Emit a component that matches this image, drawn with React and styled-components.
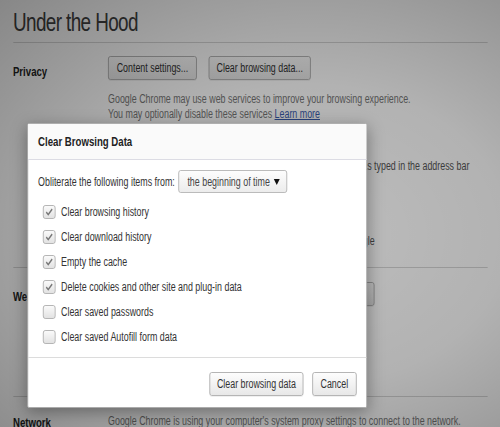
import React from 'react';
import styled, { createGlobalStyle } from 'styled-components';

// the reference is a horizontally squeezed capture, so the whole stage is laid
// out 676px wide and narrowed to 500px on screen
const SQUEEZE = 0.74;

const GlobalStyle = createGlobalStyle`
  html, body {
    margin: 0;
    padding: 0;
    background: #fff;
    overflow: hidden;
  }
  body {
    font-family: "Liberation Sans", Arial, sans-serif;
    font-size: 12px;
    color: #333;
  }
`;

const Stage = styled.div`
  position: relative;
  width: ${500 / SQUEEZE}px;
  height: 427px;
  overflow: hidden;
  transform: scale(${SQUEEZE}, 1);
  transform-origin: 0 0;
`;

const Page = styled.div`
  padding: 8px 17px 0 17.5px;
`;

const Title = styled.h1`
  margin: 0;
  font-weight: normal;
  font-size: 25.5px;
  letter-spacing: -0.8px;
  color: #404040;
  height: 34px;
  border-bottom: 1px solid #d6d6d6;
`;

const Section = styled.div`
  display: grid;
  grid-template-columns: 128.5px 1fr;
  padding: ${p => p.pad || '13px 0 0'};
  border-bottom: ${p => (p.line ? '1px solid #d6d6d6' : 'none')};
  height: ${p => p.h || 'auto'};
  box-sizing: border-box;
`;

const Label = styled.div`
  font-weight: bold;
  font-size: 13px;
  color: #222;
  padding-top: ${p => p.top || '6px'};
  white-space: nowrap;
`;

const Content = styled.div`
  display: flex;
  flex-direction: column;
`;

const ButtonRow = styled.div`
  display: flex;
  gap: ${p => p.gap || 16}px;
  align-items: center;
  color: #555;
  white-space: nowrap;
`;

const Button = styled.button`
  font-family: inherit;
  font-size: 12px;
  color: #333;
  height: 24px;
  width: ${p => p.w}px;
  padding: 0;
  border: 1px solid #aaa;
  border-radius: 3px;
  background: linear-gradient(#fdfdfd, #e8e8e8);
  box-shadow: 0 1px 0 rgba(0, 0, 0, 0.06);
  white-space: nowrap;
`;

const Desc = styled.p`
  margin: ${p => p.m || '12px 0 0'};
  color: #777;
  font-size: 12px;
  line-height: 15px;
  white-space: nowrap;
`;

const Link = styled.a`
  color: #3a5dae;
  text-decoration: underline;
`;

const OptionRow = styled.div`
  display: flex;
  align-items: center;
  gap: 5px;
  height: 25px;
  color: #555;
  white-space: nowrap;
`;

const Overlay = styled.div`
  position: absolute;
  inset: 0;
  background: radial-gradient(
    ellipse at 62% 55%,
    rgba(0, 0, 0, 0.26) 0%,
    rgba(0, 0, 0, 0.3) 45%,
    rgba(0, 0, 0, 0.47) 100%
  );
`;

const Dialog = styled.div`
  position: absolute;
  left: 36.5px;
  top: 123px;
  width: 459.5px;
  background: #fff;
  border: 1px solid #a9a9a9;
  border-radius: 2px;
  box-shadow: 0 4px 18px rgba(0, 0, 0, 0.35);
  box-sizing: border-box;
`;

const DialogHeader = styled.div`
  height: 35px;
  display: flex;
  align-items: center;
  padding: 0 14px;
  background: #fafafa;
  border-bottom: 1px solid #dcdce4;
  font-weight: bold;
  font-size: 13px;
  color: #222;
`;

const DialogBody = styled.div`
  padding: 10px 14px 8px;
`;

const FromRow = styled.div`
  display: flex;
  align-items: center;
  gap: 5px;
  color: #333;
  margin-bottom: 6px;
  white-space: nowrap;
`;

const Select = styled.div`
  display: flex;
  align-items: center;
  justify-content: space-between;
  width: ${p => p.w}px;
  height: 23px;
  box-sizing: border-box;
  padding: 0 9px 0 11px;
  border: 1px solid #b0b0b0;
  border-radius: 3px;
  background: linear-gradient(#fdfdfd, #ececec);
  color: #444;
`;

const Arrow = styled.span`
  width: 0;
  height: 0;
  border-left: 4px solid transparent;
  border-right: 4px solid transparent;
  border-top: 6px solid #111;
`;

const CheckRow = styled.label`
  display: flex;
  align-items: center;
  gap: 8px;
  height: 25px;
  padding-left: 6px;
  color: #333;
  white-space: nowrap;
`;

const Box = styled.span`
  flex: none;
  width: 15px;
  height: 12px;
  border: 1px solid #aaa;
  border-radius: 3px;
  background: linear-gradient(#fafafa, #e2e2e2);
  display: flex;
  align-items: center;
  justify-content: center;
`;

const DialogFooter = styled.div`
  display: flex;
  justify-content: flex-end;
  gap: 12px;
  padding: 14px 13.5px 11px;
  border-top: 1px solid #dcdcdc;
`;

const Check = ({ checked }) => (
  <Box>
    {checked && (
      <svg width="11" height="8" viewBox="0 0 11 8">
        <path d="M1.5 4.2 L4.2 6.6 L9.5 1.2" fill="none" stroke="#777" strokeWidth="1.8" />
      </svg>
    )}
  </Box>
);

const items = [
  ['Clear browsing history', true],
  ['Clear download history', true],
  ['Empty the cache', true],
  ['Delete cookies and other site and plug-in data', true],
  ['Clear saved passwords', false],
  ['Clear saved Autofill form data', false],
];

const privacyOptions = [
  'Use a web service to help resolve navigation errors',
  'Use a suggestion service to help complete searches and URLs typed in the address bar',
  'Use a prediction service to load pages more quickly',
  'Enable phishing and malware protection',
  'Automatically send usage statistics and crash reports to Google',
];

export default function App() {
  return (
    <>
      <GlobalStyle />
      <Stage>
        <Page>
          <Title>Under the Hood</Title>
          <Section line h="225px">
            <Label top="8px">Privacy</Label>
            <Content>
              <ButtonRow>
                <Button w={120}>Content settings...</Button>
                <Button w={138}>Clear browsing data...</Button>
              </ButtonRow>
              <Desc>
                Google Chrome may use web services to improve your browsing experience.
                <br />
                You may optionally disable these services <Link>Learn more</Link>
              </Desc>
              <Content style={{ marginTop: 6 }}>
                {privacyOptions.map(text => (
                  <OptionRow key={text}>
                    <Check checked />
                    {text}
                  </OptionRow>
                ))}
              </Content>
            </Content>
          </Section>
          <Section line h="129px" pad="14px 0 0">
            <Label top="7px">Web Content</Label>
            <Content>
              <ButtonRow gap={8}>
                Font size:
                <Select w={140}>
                  Medium
                  <Arrow />
                </Select>
                <Button w={144} style={{ marginLeft: 8 }}>Customize fonts...</Button>
              </ButtonRow>
            </Content>
          </Section>
          <Section pad="17px 0 0">
            <Label top="1px">Network</Label>
            <Content>
              <Desc m="0">
                Google Chrome is using your computer's system proxy settings to connect to the network.
              </Desc>
            </Content>
          </Section>
        </Page>
        <Overlay />
        <Dialog>
          <DialogHeader>Clear Browsing Data</DialogHeader>
          <DialogBody>
            <FromRow>
              Obliterate the following items from:
              <Select w={147}>
                the beginning of time
                <Arrow />
              </Select>
            </FromRow>
            {items.map(([label, checked]) => (
              <CheckRow key={label}>
                <Check checked={checked} />
                {label}
              </CheckRow>
            ))}
          </DialogBody>
          <DialogFooter>
            <Button w={127}>Clear browsing data</Button>
            <Button w={59.5}>Cancel</Button>
          </DialogFooter>
        </Dialog>
      </Stage>
    </>
  );
}
